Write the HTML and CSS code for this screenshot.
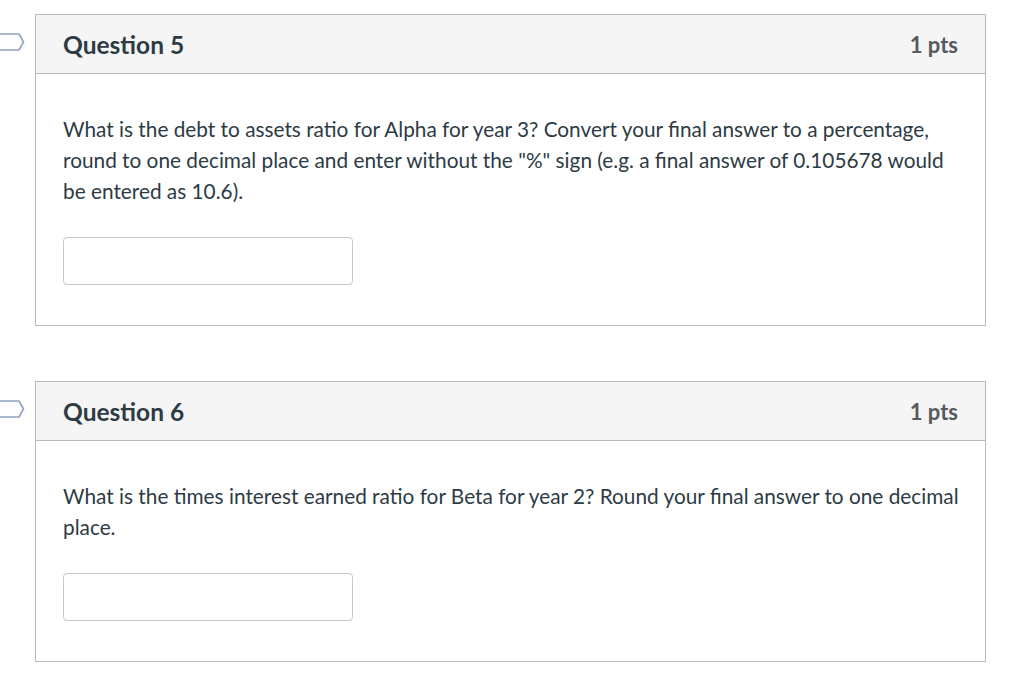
FILE: index.html
```html
<!DOCTYPE html>
<html>
<head>
<meta charset="utf-8">
<link rel="stylesheet" href="styles.css">
</head>
<body>
<div class="page">
  <div class="question">
    <svg class="flag" width="26" height="20" viewBox="0 0 26 20"><path d="M-4 2 H19 L23.5 10 L19 18 H-4" fill="none" stroke="#8fa5bd" stroke-width="1.6" stroke-linejoin="round"/></svg>
    <div class="q-header">
      <span class="q-title">Question 5</span>
      <span class="q-pts">1 pts</span>
    </div>
    <div class="q-body">
      <p class="q-text">What is the debt to assets ratio for Alpha for year 3? Convert your final answer to a percentage, round to one decimal place and enter without the "%" sign (e.g. a final answer of 0.105678 would be entered as 10.6).</p>
      <input class="q-input" type="text">
    </div>
  </div>
  <div class="question">
    <svg class="flag" width="26" height="20" viewBox="0 0 26 20"><path d="M-4 2 H19 L23.5 10 L19 18 H-4" fill="none" stroke="#8fa5bd" stroke-width="1.6" stroke-linejoin="round"/></svg>
    <div class="q-header">
      <span class="q-title">Question 6</span>
      <span class="q-pts">1 pts</span>
    </div>
    <div class="q-body">
      <p class="q-text">What is the times interest earned ratio for Beta for year 2? Round your final answer to one decimal place.</p>
      <input class="q-input" type="text">
    </div>
  </div>
</div>
</body>
</html>
```
FILE: styles.css
```css
html, body {
  margin: 0;
  padding: 0;
  background: #ffffff;
}
body {
  font-family: Lato, "Open Sans", sans-serif;
  color: #2d3b45;
}
.page {
  display: flex;
  flex-direction: column;
  gap: 55px;
  padding: 14px 38px 0 35px;
}
.question {
  position: relative;
  border: 1px solid #b9b9b9;
  width: 949px;
}
.flag {
  position: absolute;
  left: -36px;
  top: 17px;
}
.q-header {
  display: flex;
  justify-content: space-between;
  align-items: center;
  height: 58px;
  padding: 0 27px 0 27px;
  background: #f5f5f5;
  border-bottom: 1px solid #b9b9b9;
}
.q-title {
  font-size: 24.5px;
  font-weight: 700;
  color: #2d3b45;
}
.q-pts {
  font-size: 22px;
  font-weight: 700;
  color: #555a5e;
}
.q-body {
  padding: 39px 22px 40px 27px;
}
.q-text {
  margin: 0;
  font-size: 20.8px;
  line-height: 31px;
  color: #2d3b45;
}
.q-input {
  display: block;
  box-sizing: border-box;
  margin-top: 31px;
  width: 290px;
  height: 48px;
  border: 1px solid #c8c8c8;
  border-radius: 4px;
  background: #fff;
}
```
